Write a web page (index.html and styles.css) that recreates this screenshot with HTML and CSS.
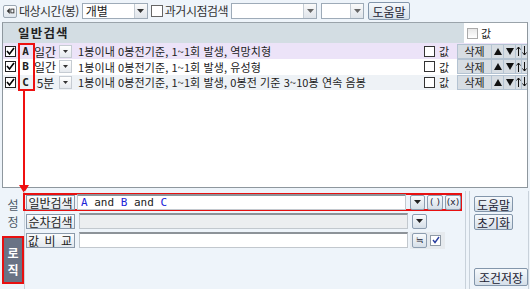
FILE: index.html
```html
<!DOCTYPE html>
<html lang="ko">
<head>
<meta charset="utf-8">
<link rel="stylesheet" href="styles.css">
</head>
<body>
<div class="page">
  <div class="top">
    <span class="icobtn"><svg width="9" height="8" viewBox="0 0 12 10"><polygon points="1,5 5,1 5,9" fill="#333"/><rect x="6.5" y="2.5" width="4" height="5" fill="none" stroke="#333" stroke-width="1.2"/></svg></span>
    <span class="lbl">대상시간(봉)</span>
    <span class="sel w66"><span class="val">개별</span><span class="arr"><svg width="7" height="4" viewBox="0 0 7 4"><polygon points="0,0 7,0 3.5,4" fill="#333"/></svg></span></span>
    <span class="cb"></span>
    <span class="lbl">과거시점검색</span>
    <span class="sel w86"><span class="val"></span><span class="arr"><svg width="7" height="4" viewBox="0 0 7 4"><polygon points="0,0 7,0 3.5,4" fill="#666"/></svg></span></span>
    <span class="sel w43"><span class="val"></span><span class="arr"><svg width="7" height="4" viewBox="0 0 7 4"><polygon points="0,0 7,0 3.5,4" fill="#666"/></svg></span></span>
    <span class="btn help">도움말</span>
  </div>

  <div class="main">
    <div class="hdr">
      <span class="title">일반검색</span>
      <span class="hdr-right"><span class="cb grey"></span><span>값</span></span>
    </div>
    <div class="row r1">
      <span class="cb chk"><svg width="9" height="9" viewBox="0 0 9 9"><path d="M1 4 L3.5 7 L8 1" stroke="#000" stroke-width="1.6" fill="none"/></svg></span>
      <span class="letter">A</span>
      <span class="per">일간</span>
      <span class="dd"><svg width="5" height="3" viewBox="0 0 5 3"><polygon points="0,0 5,0 2.5,3" fill="#333"/></svg></span>
      <span class="desc">1봉이내 0봉전기준, 1~1회 발생, 역망치형</span>
      <span class="cb"></span><span class="val-l">값</span>
      <span class="del">삭제</span>
      <span class="mv"><svg width="8" height="7" viewBox="0 0 8 7"><polygon points="4,0 8,7 0,7" fill="#111"/></svg></span>
      <span class="mv"><svg width="8" height="7" viewBox="0 0 8 7"><polygon points="0,0 8,0 4,7" fill="#111"/></svg></span>
      <span class="mv s"><svg width="5" height="10" viewBox="0 0 5 10"><path d="M2.5 1 V10 M0.5 3.5 L2.5 1 L4.5 3.5" stroke="#111" stroke-width="1" fill="none"/></svg></span>
      <span class="mv s"><svg width="5" height="10" viewBox="0 0 5 10"><path d="M2.5 0 V9 M0.5 6.5 L2.5 9 L4.5 6.5" stroke="#111" stroke-width="1" fill="none"/></svg></span>
    </div>
    <div class="row r2">
      <span class="cb chk"><svg width="9" height="9" viewBox="0 0 9 9"><path d="M1 4 L3.5 7 L8 1" stroke="#000" stroke-width="1.6" fill="none"/></svg></span>
      <span class="letter">B</span>
      <span class="per">일간</span>
      <span class="dd"><svg width="5" height="3" viewBox="0 0 5 3"><polygon points="0,0 5,0 2.5,3" fill="#333"/></svg></span>
      <span class="desc">1봉이내 0봉전기준, 1~1회 발생, 유성형</span>
      <span class="cb"></span><span class="val-l">값</span>
      <span class="del">삭제</span>
      <span class="mv"><svg width="8" height="7" viewBox="0 0 8 7"><polygon points="4,0 8,7 0,7" fill="#111"/></svg></span>
      <span class="mv"><svg width="8" height="7" viewBox="0 0 8 7"><polygon points="0,0 8,0 4,7" fill="#111"/></svg></span>
      <span class="mv s"><svg width="5" height="10" viewBox="0 0 5 10"><path d="M2.5 1 V10 M0.5 3.5 L2.5 1 L4.5 3.5" stroke="#111" stroke-width="1" fill="none"/></svg></span>
      <span class="mv s"><svg width="5" height="10" viewBox="0 0 5 10"><path d="M2.5 0 V9 M0.5 6.5 L2.5 9 L4.5 6.5" stroke="#111" stroke-width="1" fill="none"/></svg></span>
    </div>
    <div class="row r3">
      <span class="cb chk"><svg width="9" height="9" viewBox="0 0 9 9"><path d="M1 4 L3.5 7 L8 1" stroke="#000" stroke-width="1.6" fill="none"/></svg></span>
      <span class="letter">C</span>
      <span class="per c">5분</span>
      <span class="dd"><svg width="5" height="3" viewBox="0 0 5 3"><polygon points="0,0 5,0 2.5,3" fill="#333"/></svg></span>
      <span class="desc">1봉이내 0봉전기준, 1~1회 발생, 0봉전 기준 3~10봉 연속 음봉</span>
      <span class="cb"></span><span class="val-l">값</span>
      <span class="del">삭제</span>
      <span class="mv"><svg width="8" height="7" viewBox="0 0 8 7"><polygon points="4,0 8,7 0,7" fill="#111"/></svg></span>
      <span class="mv"><svg width="8" height="7" viewBox="0 0 8 7"><polygon points="0,0 8,0 4,7" fill="#111"/></svg></span>
      <span class="mv s"><svg width="5" height="10" viewBox="0 0 5 10"><path d="M2.5 1 V10 M0.5 3.5 L2.5 1 L4.5 3.5" stroke="#111" stroke-width="1" fill="none"/></svg></span>
      <span class="mv s"><svg width="5" height="10" viewBox="0 0 5 10"><path d="M2.5 0 V9 M0.5 6.5 L2.5 9 L4.5 6.5" stroke="#111" stroke-width="1" fill="none"/></svg></span>
    </div>
    <div class="redbox-letters"></div>
  </div>

  <div class="arrow"><svg width="10" height="104" viewBox="0 0 10 104"><line x1="5" y1="0" x2="5" y2="96" stroke="#f01010" stroke-width="2"/><polygon points="0,96 10,96 5,104" fill="#f01010"/></svg></div>

  <div class="bottom">
    <div class="tabs">
      <div class="tab set">설<br>정</div>
      <div class="tab logic">로<br>직</div>
    </div>
    <div class="logic-body">
      <div class="lrow first">
        <span class="lbtn">일반검색</span>
        <span class="inp"><b class="b">A</b> and <b class="b">B</b> and <b class="b">C</b></span>
        <span class="sbtn"><svg width="7" height="4" viewBox="0 0 7 4"><polygon points="0,0 7,0 3.5,4" fill="#222"/></svg></span>
        <span class="sbtn t">( )</span>
        <span class="sbtn t">(x)</span>
      </div>
      <div class="lrow">
        <span class="lbtn">순차검색</span>
        <span class="inp dis"></span>
        <span class="sbtn"><svg width="7" height="4" viewBox="0 0 7 4"><polygon points="0,0 7,0 3.5,4" fill="#222"/></svg></span>
      </div>
      <div class="lrow">
        <span class="lbtn sp">값 비 교</span>
        <span class="inp"></span>
        <span class="tools">
          <span class="sbtn t eq">≒</span>
          <span class="cb small"><svg width="8" height="8" viewBox="0 0 8 8"><path d="M1 4 L3 6.5 L7 1" stroke="#2a3fa0" stroke-width="1.4" fill="none"/></svg></span>
        </span>
      </div>
    </div>
    <div class="side">
      <span class="btn sbig">도움말</span>
      <span class="btn sbig">초기화</span>
      <span class="btn sbig save">조건저장</span>
    </div>
  </div>
</div>
</body>
</html>
```

FILE: styles.css
```css
* { box-sizing: border-box; }
html, body { margin: 0; padding: 0; }
body {
  width: 530px; height: 289px; overflow: hidden;
  background: #eef4fa;
  font-family: "Noto Sans CJK KR", "Noto Sans", sans-serif;
  font-size: 11px; color: #222;
}
.page { position: relative; width: 530px; height: 289px; }

.top { height: 22px; display: flex; align-items: center; padding-left: 3px; }
.icobtn {
  width: 14px; height: 13px; border: 1px solid #9aa6b2; border-radius: 2px;
  background: linear-gradient(#fdfdfd, #dfe6ee);
  display: flex; align-items: center; justify-content: center; flex: none;
}
.lbl { margin-left: 2px; font-size: 12px; letter-spacing: -0.5px; color: #333; line-height: 14px; flex: none; }
.sel {
  height: 16px; border: 1px solid #9eabb8; background: #fff;
  display: flex; margin-left: 3px; flex: none;
}
.sel .val { flex: 1; padding-left: 3px; font-size: 12px; line-height: 14px; }
.sel .arr {
  width: 13px; border-left: 1px solid #c4ccd4;
  background: linear-gradient(#fafafa, #dfe4ea);
  display: flex; align-items: center; justify-content: center;
}
.w66 { width: 66px; }
.w86 { width: 86px; margin-left: 3px; }
.w43 { width: 43px; margin-left: 4px; }
.cb {
  width: 11px; height: 11px; border: 1px solid #555; background: #fff;
  display: inline-flex; align-items: center; justify-content: center; flex: none;
}
.top .cb { margin-left: 3px; width: 12px; height: 12px; border-color: #666; }
.btn {
  border: 1px solid #8396ab; border-radius: 2px;
  background: linear-gradient(#f6f9fc, #d5dfe9);
  color: #223; font-size: 12px; display: inline-flex; align-items: center; justify-content: center; flex: none;
}
.help { width: 42px; height: 18px; margin-left: 4px; }

.main {
  margin: 0 2px; height: 166px; border: 1px solid #8e979e; border-top-color: #9aa3aa;
  background: #fff; position: relative;
}
.hdr { height: 20px; display: flex; background: #d3dde3; }
.title { font-weight: bold; font-size: 12.5px; letter-spacing: 1.2px; padding-left: 15px; line-height: 20px; color: #222; flex: 1; }
.hdr-right { width: 63px; background: #fff; display: flex; align-items: center; gap: 3px; padding-left: 3px; font-size: 11px; }
.cb.grey { border-color: #aaa; background: linear-gradient(#e8e8e8, #fff); }

.row { height: 15.5px; display: flex; align-items: center; padding-left: 2px; font-size: 11px; }
.row > * { flex: none; }
.r1 { background: #ece3f8; height: 16px; }
.r2 { background: #fff; }
.r3 { background: #eef2f6; }
.row .cb.chk { width: 11px; height: 11px; border: 1px solid #222; }
.letter { width: 15px; margin-left: 2px; text-align: center; font-weight: bold; font-size: 11px; font-family: "DejaVu Sans Mono", monospace; }
.per { width: 23px; margin-left: 1px; font-size: 12px; }
.per.c { text-align: center; }
.dd {
  width: 13px; height: 13px; margin-left: 2px; border: 1px solid #c5cbd2;
  background: linear-gradient(#fff, #e5e9ee); display: flex; align-items: center; justify-content: center;
}
.row .desc { flex: 1 1 0; min-width: 0; overflow: hidden; margin-left: 6px; font-size: 11px; white-space: nowrap; letter-spacing: 0.1px; }
.row .cb:not(.chk) { border-color: #333; width: 11px; height: 11px; }
.val-l { margin-left: 4px; width: 14px; font-size: 11px; }
.del {
  margin-left: 4px; width: 35px; height: 15px; border: 1px solid #b4c3d2;
  background: #d7dde3; display: flex; align-items: center; justify-content: center; font-size: 11px;
}
.mv {
  width: 12px; height: 15px; border: 1px solid #b4c3d2; border-left: none;
  background: #d7dde3; display: flex; align-items: center; justify-content: center;
}
.mv.s { width: 6px; }
.mv.s:last-child { width: 5px; border-right: none; }
.redbox-letters {
  position: absolute; left: 15px; top: 20px; width: 17px; height: 48px;
  border: 2px solid #ee1010;
}
.arrow { position: absolute; left: 19px; top: 89px; width: 10px; height: 104px; }

.bottom { display: flex; height: 99px; margin-top: 3px; }
.tabs { width: 24px; display: flex; flex-direction: column; padding-left: 2px; }
.tab { text-align: center; font-size: 12px; line-height: 17px; }
.tab.set { height: 45px; padding-top: 5px; color: #4d5a68; }
.tab.logic {
  height: 48px; background: #6a7385; color: #fff; font-weight: bold;
  border: 2px solid #e81010; padding-top: 6px; font-size: 12px;
}
.logic-body {
  width: 442px; border-left: 1px solid #c8d1da; border-right: 1px solid #c8d1da;
  border-bottom: 1px solid #c8d1da; padding-top: 2px; position: relative;
}
.lrow { display: flex; align-items: center; height: 18px; }
.lrow > * { flex: none; }
.lrow.first { border: 2px solid #e81010; height: 18px; margin-left: -2px; width: 439px; margin-top: 0; }
.lrow:not(.first) { margin-top: 1px; }
.lbtn {
  width: 49px; height: 15px; border: 1px solid #8a99aa; margin-left: 1px;
  background: linear-gradient(#fbfcfd, #e2e8ee); font-size: 12px; display: flex; align-items: center; justify-content: center; color: #222;
}
.lbtn.sp { letter-spacing: 1px; }
.inp {
  width: 329px; height: 16px; margin-left: 2px; background: #fff;
  border: 1px solid #c2c8ce; border-top: 2px solid #8d9399; font-size: 11px; padding-left: 3px; line-height: 13px;
  font-family: "DejaVu Sans Mono", monospace; color: #222;
}
.lrow:not(.first) .inp { margin-left: 4px; }
.inp.dis { background: #eceef0; }
.inp .b { color: #1a22d8; font-weight: normal; }
.sbtn {
  width: 15px; height: 15px; margin-left: 4px; border: 1px solid #8d9db0; border-radius: 2px;
  background: linear-gradient(#f8fafc, #d6dfe8); display: flex; align-items: center; justify-content: center; font-size: 10px; color: #223;
}
.sbtn.t { width: 16px; margin-left: 2px; font-family: "DejaVu Sans", sans-serif; font-size: 9px; }
.tools { display: flex; align-items: center; background: #e6eaee; height: 17px; padding-right: 4px; margin-left: 2px; }
.tools .sbtn.eq { margin-left: 2px; width: 15px; }
.cb.small { margin-left: 3px; width: 11px; height: 11px; border-color: #8f9aa5; }
.side {
  width: 60px; margin-left: 3px; border: 1px solid #c8d1da; border-top: none;
  display: flex; flex-direction: column; align-items: flex-start; padding: 5px 0 3px 4px;
}
.btn.sbig { width: 39px; height: 16px; margin-bottom: 2px; font-size: 12px; }
.btn.save { width: 54px; height: 18px; margin-top: auto; margin-bottom: 0; }
```
